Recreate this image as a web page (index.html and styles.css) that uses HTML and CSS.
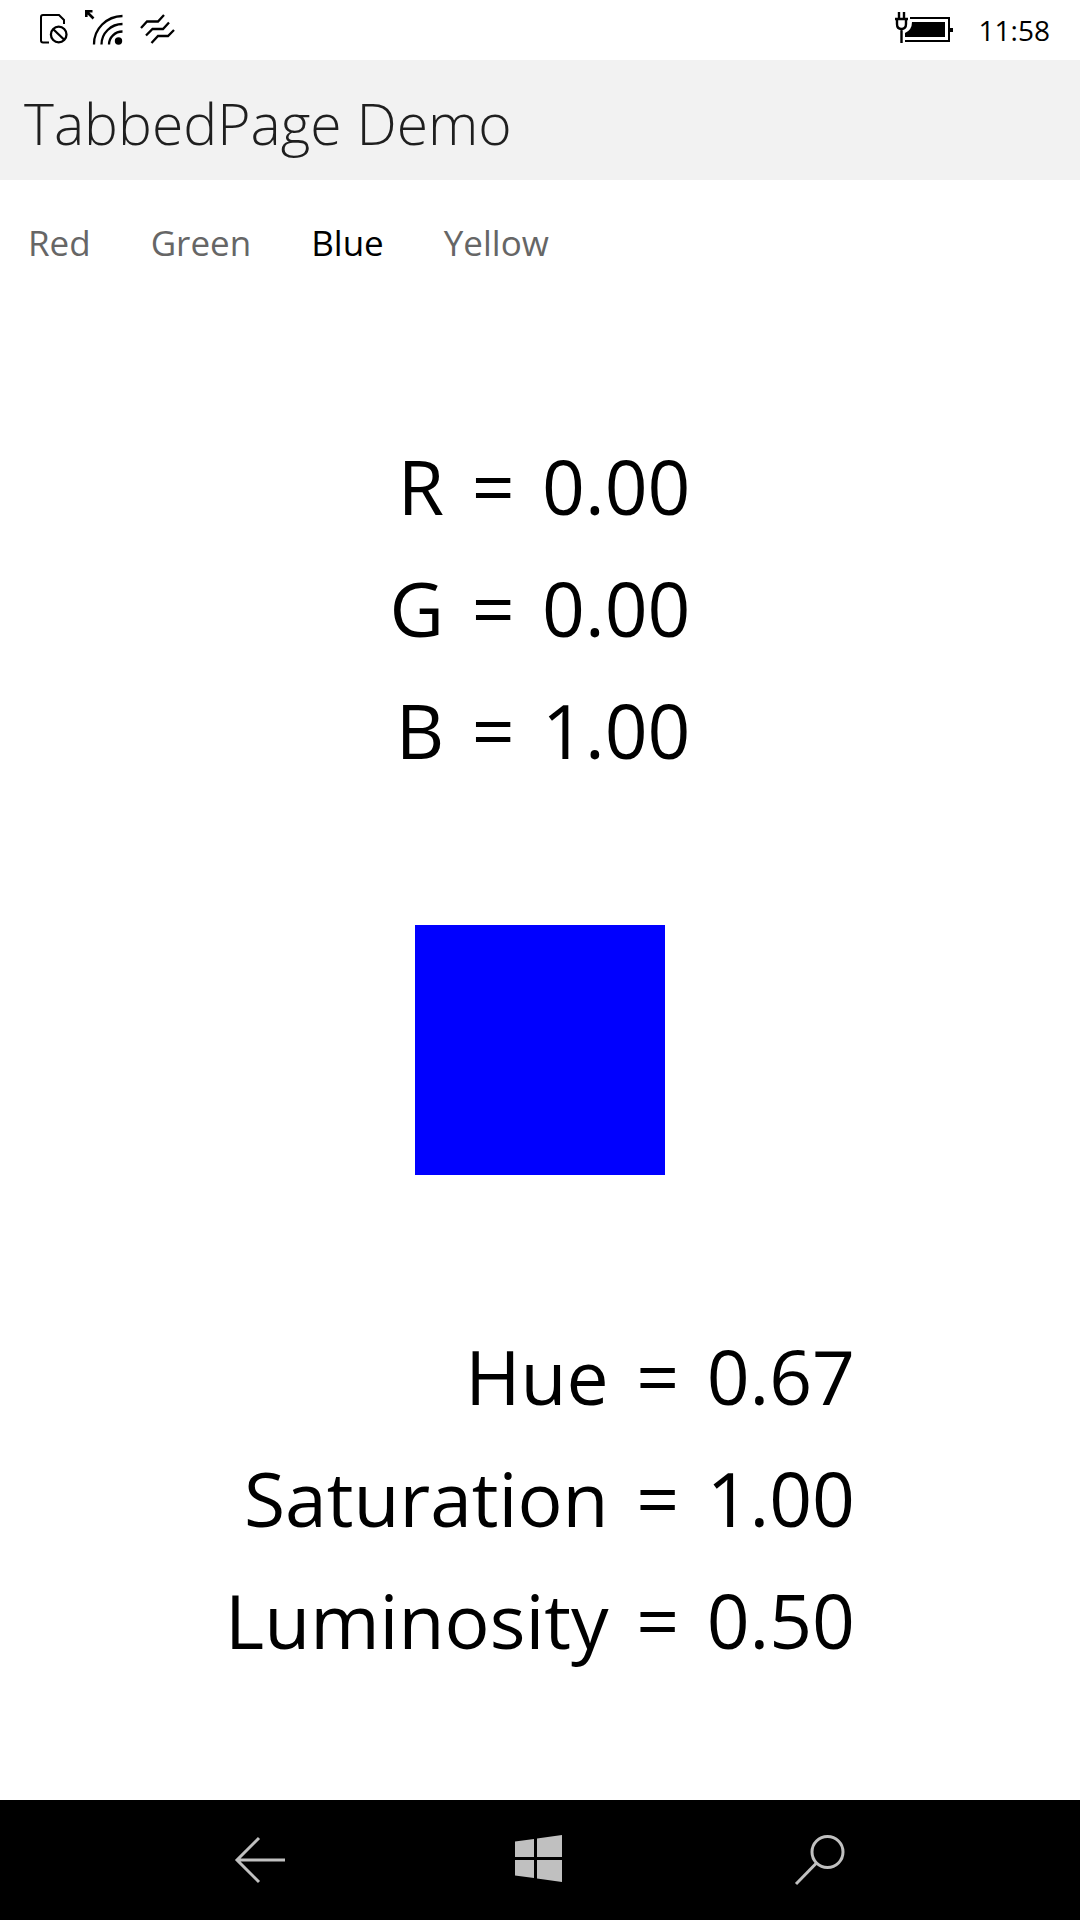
FILE: index.html
```html
<!DOCTYPE html>
<html lang="en">
<head>
<meta charset="utf-8">
<meta name="viewport" content="width=device-width, initial-scale=1">
<title>TabbedPage Demo</title>
<link rel="stylesheet" href="styles.css">
</head>
<body>
<div class="status-bar">
  <div class="status-icons">
    <svg class="icon-sim" viewBox="0 0 28 32" fill="none" stroke="#000" stroke-width="2" aria-hidden="true">
      <path d="M9 29.500H3Q1 29.500 1 27.500V4Q1 2 3 2H19L24 7V11"/>
      <circle cx="18.700" cy="21.500" r="7.800" stroke-width="2.300"/>
      <path d="M13 16L24.500 27" stroke-width="2.300"/>
    </svg>
    <svg class="icon-wifi" viewBox="0 0 38 36" fill="none" stroke="#000" stroke-width="2.300" aria-hidden="true">
      <path d="M9 35.500A29 28 0 0 1 37.500 7M16.500 35.500A21 20.500 0 0 1 37.500 15M24 35.500A13.500 13 0 0 1 37.500 22.500"/>
      <circle cx="33.500" cy="32" r="3.700" fill="#000" stroke="none"/>
      <path d="M1.300 8V2.200H7.500M1.500 2.500L8.500 9.500" stroke-width="2.600"/>
    </svg>
    <svg class="icon-waves" viewBox="0 0 36 30" fill="none" stroke="#000" stroke-width="2.300" aria-hidden="true">
      <path d="M1 14L7 7.500H18L24 1M6 21.500L12.500 15H23L29 8.500M11.500 29L18 22H28L34 16"/>
    </svg>
  </div>
  <div class="status-right">
    <svg class="icon-battery" viewBox="0 0 58 32" fill="none" stroke="#000" stroke-width="2" aria-hidden="true">
      <path d="M15 6H54V29H10"/>
      <path d="M17 10H50V25H10V21Q17 18 17 10Z" fill="#000" stroke="none"/>
      <path d="M54 16H58V20H54Z" fill="#000" stroke="none"/>
      <path d="M4 0V7M9 0V7M0 7H13M2 7V12Q2 17 6.500 17Q11 17 11 12V7M6.500 17V31" stroke-width="2.400"/>
    </svg>
    <time class="clock">11:58</time>
  </div>
</div>
<header class="title-bar"><h1 class="title">TabbedPage Demo</h1></header>
<nav class="tabs" aria-label="Colors">
  <button class="tab" type="button">Red</button>
  <button class="tab" type="button">Green</button>
  <button class="tab tab-active" type="button" aria-current="page">Blue</button>
  <button class="tab" type="button">Yellow</button>
</nav>
<main class="page">
  <div class="readout">
    <div class="row"><span>R</span><span class="equals">=</span><span>0.00</span></div>
    <div class="row"><span>G</span><span class="equals">=</span><span>0.00</span></div>
    <div class="row"><span>B</span><span class="equals">=</span><span>1.00</span></div>
  </div>
  <div class="swatch"></div>
  <div class="readout">
    <div class="row"><span>Hue</span><span class="equals">=</span><span>0.67</span></div>
    <div class="row"><span>Saturation</span><span class="equals">=</span><span>1.00</span></div>
    <div class="row"><span>Luminosity</span><span class="equals">=</span><span>0.50</span></div>
  </div>
</main>
<footer class="nav-bar">
  <button class="nav-button" type="button" aria-label="Back">
    <svg class="nav-icon" viewBox="0 0 52 52" fill="none" stroke="#c0c0c0" stroke-width="3"><path d="M51 26H3M25 4L3 26L25 48"/></svg>
  </button>
  <button class="nav-button" type="button" aria-label="Start">
    <svg class="nav-icon" viewBox="0 0 52 52" fill="#c0c0c0"><path d="M1 7.500L20 5V23H1ZM23 4.500L48 1V23H23ZM1 26H20V44L1 41.500ZM23 26H48V48L23 44.500Z"/></svg>
  </button>
  <button class="nav-button" type="button" aria-label="Search">
    <svg class="nav-icon" viewBox="0 0 52 52" fill="none" stroke="#c0c0c0" stroke-width="3"><circle cx="33.500" cy="18" r="15.500"/><path d="M22.500 29L2 50"/></svg>
  </button>
</footer>
</body>
</html>
```
FILE: styles.css
```css
* { box-sizing: border-box; }

body {
  margin: 0;
  min-height: 100vh;
  display: flex;
  flex-direction: column;
  background: #fff;
  color: #000;
  font-family: "Open Sans", "Noto Sans", sans-serif;
}

button {
  padding: 0;
  border: 0;
  background: none;
  font: inherit;
}

svg { display: block; }

.status-bar {
  height: 60px;
  padding: 0 30px 0 40px;
  display: flex;
  align-items: center;
  justify-content: space-between;
}

.status-icons {
  height: 36px;
  display: flex;
  align-items: center;
  gap: 17px;
  margin-bottom: 6px;
}

.icon-sim { width: 28px; height: 32px; margin-top: 4px; }
.icon-wifi { width: 38px; height: 36px; }
.icon-waves { width: 36px; height: 30px; margin-top: 4px; }

.status-right {
  display: flex;
  align-items: center;
  gap: 26px;
}

.icon-battery { width: 58px; height: 32px; margin-bottom: 4px; }
.clock { font-size: 28px; line-height: 60px; }

.title-bar {
  height: 120px;
  padding: 6px 24px 0;
  background: #f2f2f2;
  display: flex;
  align-items: center;
}

.title {
  margin: 0;
  font-size: 57px;
  font-weight: 300;
  line-height: 80px;
  color: #1f1f1f;
}

.tabs {
  height: 120px;
  padding: 6px 28px 0;
  display: flex;
  align-items: center;
  gap: 60px;
}

.tab {
  font-size: 35px;
  line-height: 48px;
  color: #666;
}

.tab-active { color: #000; }

.page {
  flex: 1;
  padding: 64px 24px;
  display: flex;
  flex-direction: column;
  align-items: center;
  justify-content: space-around;
  gap: 16px;
}

.readout {
  padding-top: 6px;
  display: flex;
  flex-direction: column;
  gap: 16px;
  font-size: 75px;
  line-height: 106px;
}

.row {
  display: flex;
  justify-content: flex-end;
}

.equals {
  width: 98px;
  text-align: center;
}

.swatch {
  width: 250px;
  height: 250px;
  background: #00f;
}

.nav-bar {
  height: 120px;
  background: #000;
  display: flex;
  justify-content: center;
}

.nav-button {
  width: 280px;
  display: flex;
  align-items: center;
  justify-content: center;
}

.nav-icon { width: 52px; height: 52px; }
```
